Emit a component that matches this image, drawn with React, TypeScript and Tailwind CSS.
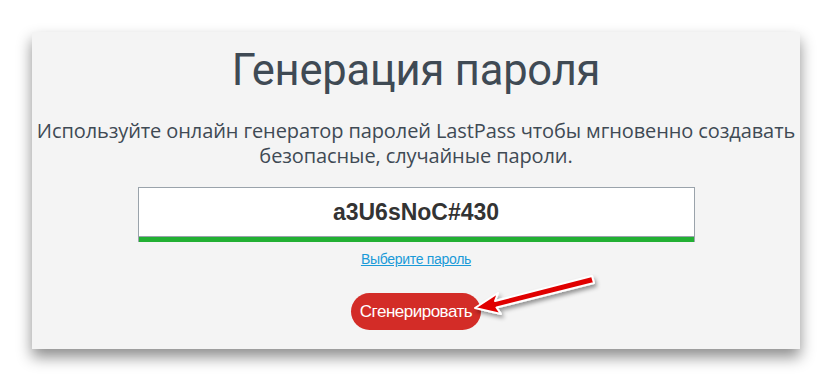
import React from "react";

function Arrow() {
  return (
    <svg
      className="absolute left-[468px] top-[270px] w-[140px] h-[50px] overflow-visible"
      viewBox="0 0 140 50"
    >
      <defs>
        <filter id="sh" x="-20%" y="-50%" width="140%" height="200%">
          <feDropShadow dx="2" dy="3" stdDeviation="2" floodColor="#000" floodOpacity="0.4" />
        </filter>
      </defs>
      <g filter="url(#sh)">
        <path
          d="M124 6 L27 31 L30 23 L7 38 L33 44 L28.5 37.5 L126 13 Z"
          fill="#e00000"
          stroke="#fff"
          strokeWidth="2"
          strokeLinejoin="round"
        />
      </g>
    </svg>
  );
}

export default function App() {
  return (
    <div className="relative w-[831px] h-[381px] bg-white pt-[32px] pl-[32px] font-['Liberation_Sans',sans-serif]">
      <div className="w-[768px] h-[317px] bg-[#f4f4f4] shadow-[0_8px_14px_rgba(0,0,0,0.45)] flex flex-col items-center">
        <h1 className="mt-[13px] text-[43.5px] leading-[52px] text-[#3f4a54] font-['Roboto',sans-serif] font-normal tracking-[-0.2px]">
          Генерация пароля
        </h1>
        <p className="mt-[21px] text-center text-[20px] leading-[25px] text-[#3f4a54] font-['Open_Sans',sans-serif] tracking-[-0.1px]">
          Используйте онлайн генератор паролей LastPass чтобы мгновенно создавать
          <br />
          безопасные, случайные пароли.
        </p>
        <div className="mt-[19px] w-[557px] h-[55px] bg-white border border-[#9aa3ab] border-b-0 flex flex-col">
          <div className="flex-1 flex items-center justify-center text-[23px] font-bold text-[#333] border-b border-[#9aa3ab]">
            a3U6sNoC#430
          </div>
          <div className="h-[5px] bg-[#22b033]" />
        </div>
        <a className="mt-[7px] text-[14px] text-[#1a9ad8] underline tracking-[-0.3px]">Выберите пароль</a>
        <button className="mt-[23px] w-[130px] h-[37px] rounded-full bg-[#d32c27] text-white text-[17px] tracking-[-0.5px]">
          Сгенерировать
        </button>
      </div>
      <Arrow />
    </div>
  );
}
